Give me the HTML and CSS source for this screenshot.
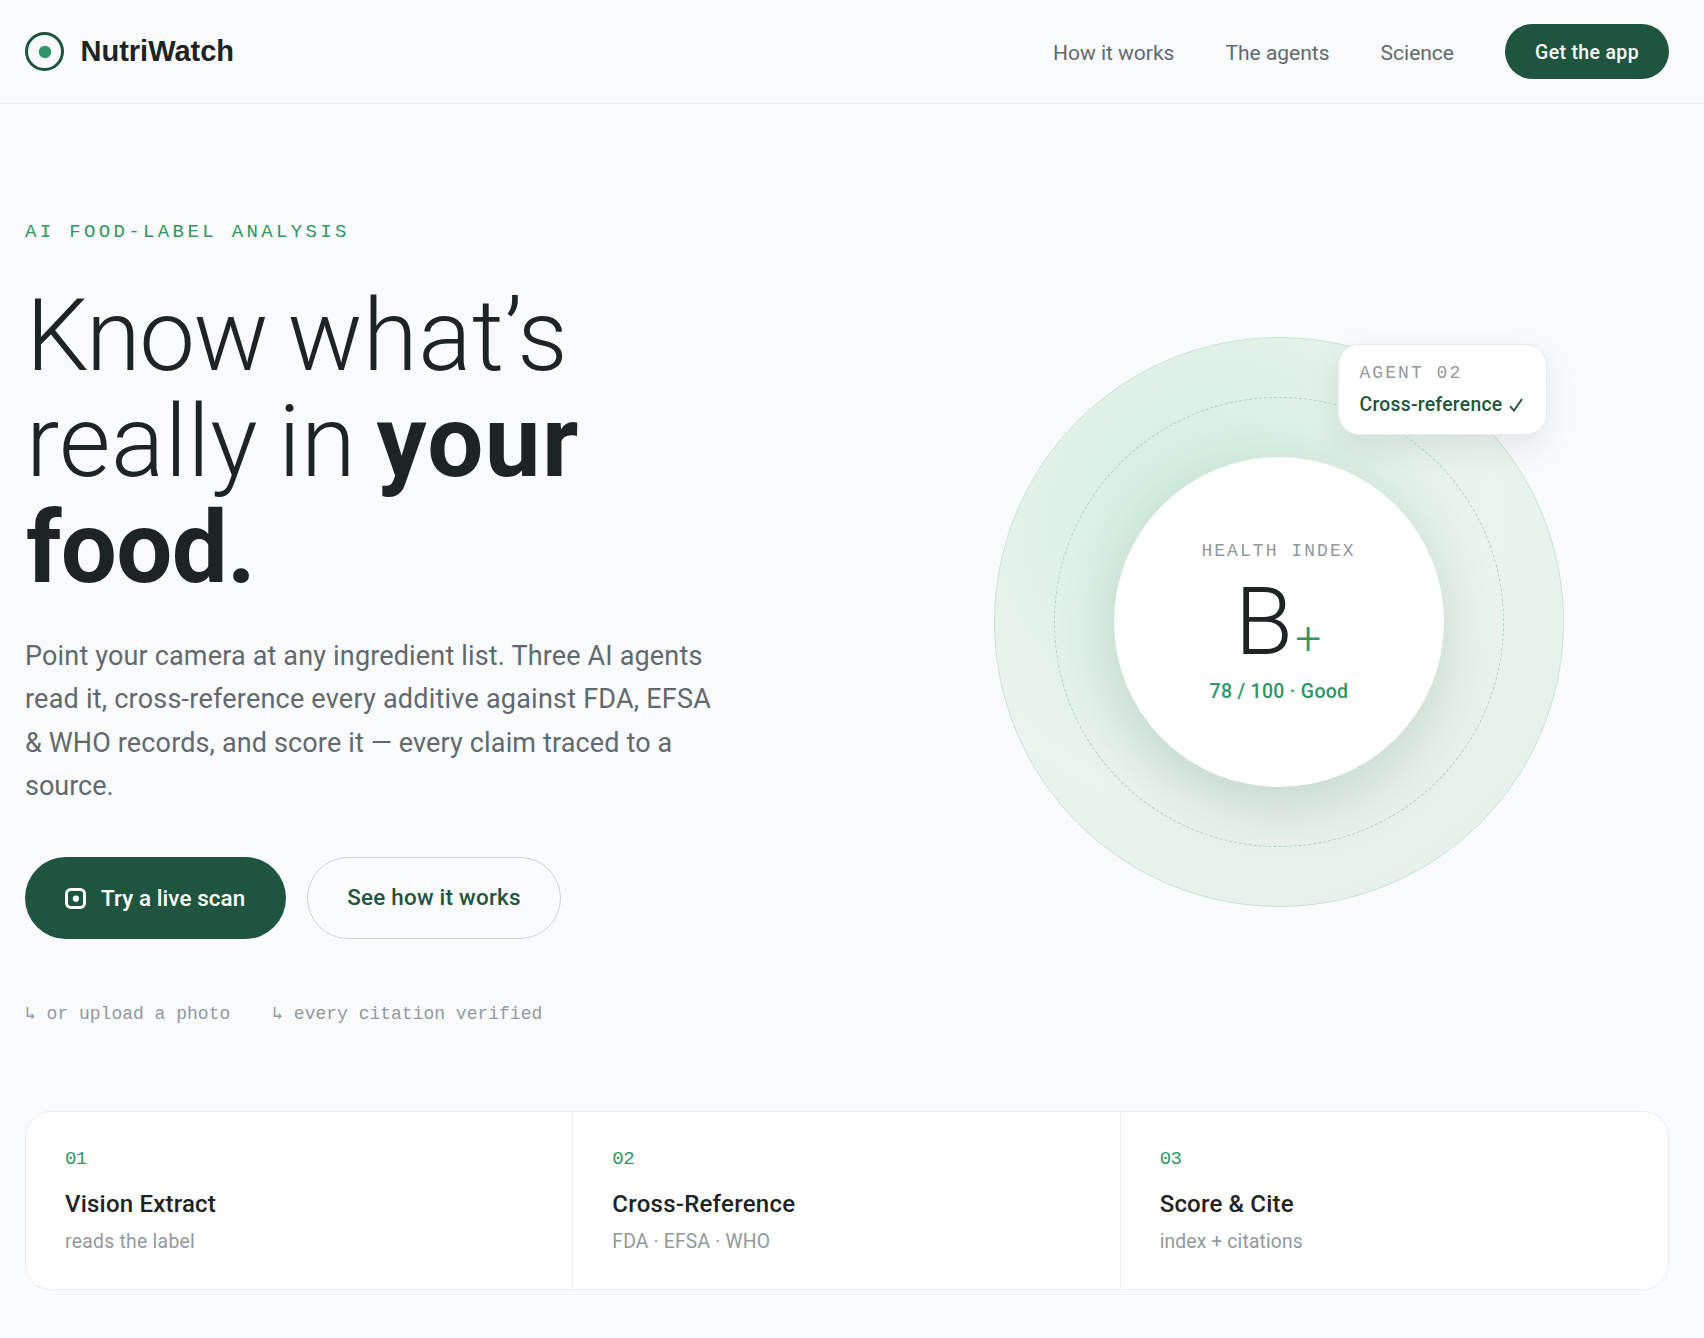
FILE: index.html
```html
<!DOCTYPE html>
<html lang="en">
<head>
<meta charset="utf-8">
<title>NutriWatch</title>
<link rel="stylesheet" href="styles.css">
</head>
<body>
<header class="header">
  <a class="brand">
    <svg class="brand-mark" viewBox="0 0 39 39"><circle cx="19.5" cy="19.5" r="18" fill="none" stroke="#1f543e" stroke-width="3"/><circle cx="20" cy="20" r="6.2" fill="#2f9566"/></svg>
    <span class="brand-name">NutriWatch</span>
  </a>
  <nav class="nav">
    <a class="nav-link">How it works</a>
    <a class="nav-link">The agents</a>
    <a class="nav-link">Science</a>
    <a class="nav-cta">Get the app</a>
  </nav>
</header>
<main class="main">
  <section class="hero">
    <div class="copy">
      <p class="eyebrow">AI FOOD-LABEL ANALYSIS</p>
      <h1 class="title"><span class="t0">Know </span><span class="t1">what’s</span><br><span class="t2">really in </span><b class="t3">your</b><br><b class="t4">food.</b></h1>
      <p class="lead"><span class="l1">Point your camera at any ingredient list. Three AI agents</span><br><span class="l2">read it, cross-reference every additive against FDA, EFSA</span><br><span class="l3">&amp; WHO records, and score it — every claim traced to a</span><br><span class="l4">source.</span></p>
      <div class="actions">
        <a class="btn btn-primary">
          <svg class="scan" viewBox="0 0 21 21"><rect x="1.5" y="1.5" width="18" height="18" rx="4.2" fill="none" stroke="#fff" stroke-width="3"/><circle cx="10.9" cy="10.7" r="3.1" fill="#fff"/></svg>
          <span>Try a live scan</span>
        </a>
        <a class="btn btn-ghost"><span>See how it works</span></a>
      </div>
      <div class="notes">
        <span><i class="arrow">↳</i> or upload a photo</span>
        <span><i class="arrow">↳</i> every citation verified</span>
      </div>
    </div>
    <div class="visual">
      <div class="halo">
        <div class="orbit">
          <div class="score">
            <span class="score-label">HEALTH INDEX</span>
            <span class="grade">B<span class="plus">+</span></span>
            <span class="score-value">78 / 100 · Good</span>
          </div>
        </div>
        <div class="chip">
          <span class="chip-label">AGENT 02</span>
          <span class="chip-text">Cross-reference <svg class="check" viewBox="0 0 14 14"><path d="M1 8.2 L5 12.6 L13 1" fill="none" stroke="#1f543e" stroke-width="1.9"/></svg></span>
        </div>
      </div>
    </div>
  </section>
  <section class="steps">
    <div class="step"><span class="num">01</span><span class="name n1">Vision Extract</span><span class="desc d1">reads the label</span></div>
    <div class="step"><span class="num">02</span><span class="name n2">Cross-Reference</span><span class="desc d2">FDA · EFSA · WHO</span></div>
    <div class="step"><span class="num">03</span><span class="name n1">Score &amp; Cite</span><span class="desc d3">index + citations</span></div>
  </section>
</main>
</body>
</html>
```
FILE: styles.css
```css
* { box-sizing: border-box; }
body { margin: 0; min-height: 1338px; background: #f9fafc; color: #1e2324; font-family: Roboto, "Liberation Sans", sans-serif; }
p, h1 { margin: 0; }
.header { display: flex; justify-content: space-between; align-items: center; height: 104px; padding: 0 35px 0 25px; border-bottom: 1px solid #ebedef; }
.brand { display: flex; align-items: center; gap: 16.5px; }
.brand-mark { width: 39px; height: 39px; }
.brand-name { font: 700 29px/36px "Liberation Sans", Arial, sans-serif; margin-top: -1px; }
.nav { display: flex; align-items: center; }
.nav-link { margin-right: 51px; padding-top: 2px; font-size: 21px; line-height: 28px; color: #62696e; }
.nav-cta { display: flex; align-items: center; justify-content: center; width: 164px; height: 55px; padding-top: 2px; border-radius: 28px; background: #1f543e; color: #fff; font-size: 19.5px; font-weight: 500; letter-spacing: .35px; }

.main { padding: 117px 35px 0 25px; }
.hero { display: grid; grid-template-columns: 1fr 1fr; gap: 82px; }
.eyebrow { margin-top: -1px; font: 19px/24px "Liberation Mono", monospace; letter-spacing: 3.36px; color: #2f9566; }
.title { margin-top: 39px; font-size: 99.5px; line-height: 106.1px; font-weight: 300; white-space: nowrap; }
.title b { font-weight: 700; }
.t0 { margin-left: 1px; letter-spacing: -1.6px; word-spacing: -2px; }
.t1 { letter-spacing: .5px; }
.t2 { margin-left: 1px; letter-spacing: .45px; word-spacing: -4.5px; }
.t3 { letter-spacing: 1.4px; }
.t4 { margin-left: 1px; letter-spacing: -.75px; }
.lead { margin-top: 33.8px; font-size: 27px; line-height: 43.4px; color: #62696e; white-space: nowrap; }
.l1 { letter-spacing: .16px; }
.l2 { letter-spacing: .22px; }
.l3 { letter-spacing: .14px; }
.l4 { letter-spacing: 0; }
.actions { display: flex; gap: 21px; margin-top: 48.6px; }
.btn { display: flex; align-items: center; height: 82px; border-radius: 41px; font-size: 22.4px; font-weight: 500; white-space: nowrap; }
.btn-primary { width: 261px; padding: 0 0 0 40px; gap: 15px; background: #1f543e; color: #fff; letter-spacing: .1px; }
.scan { width: 21px; height: 21px; }
.btn-ghost { width: 254px; justify-content: center; padding-bottom: 2px; border: 1px solid #cfd2d4; color: #1f543e; letter-spacing: .25px; }
.notes { display: flex; gap: 42px; margin-top: 62.5px; font: 18px/24px "Liberation Mono", monospace; color: #92989d; white-space: nowrap; }
.arrow { display: inline-block; width: 10.8px; font: 18px/20px "DejaVu Sans Mono", monospace; }

.visual { display: flex; align-items: center; justify-content: center; padding-bottom: 3px; }
.halo { position: relative; display: flex; align-items: center; justify-content: center; width: 570px; height: 570px; border: 1px solid #c9e3d7; border-radius: 50%; background: radial-gradient(circle at 38% 32%, #d2eddf 0%, #eaf4ee 54%, #e4eee8 100%); }
.orbit { display: flex; align-items: center; justify-content: center; width: 450px; height: 450px; border: 1px dashed #afd0c1; border-radius: 50%; }
.score { display: flex; flex-direction: column; align-items: center; justify-content: center; width: 330px; height: 330px; padding-top: 2px; border-radius: 50%; background: #fff; box-shadow: 0 22px 60px rgba(31, 84, 62, .18); }
.score-label, .chip-label { font: 18px/22px "Liberation Mono", monospace; letter-spacing: 2.05px; color: #92989d; }
.grade { display: block; margin: 12px 1px 0 0; height: 96px; font-size: 95px; line-height: 96px; font-weight: 300; }
.plus { margin-left: 2px; font-size: 46px; font-weight: 300; line-height: 1; color: #2f9566; }
.score-value { margin: 9px 0 0 1px; font-size: 19.5px; line-height: 26px; font-weight: 500; letter-spacing: .3px; color: #2f9566; }
.chip { position: absolute; top: 6px; right: 16px; width: 209px; height: 91.5px; padding: 17.5px 0 0 21px; display: flex; flex-direction: column; border: 1px solid #e6eaea; border-radius: 21px; background: #fff; box-shadow: 0 12px 32px rgba(30, 35, 36, .09); }
.chip-text { margin-top: 8px; font-size: 19.3px; line-height: 26px; font-weight: 500; letter-spacing: .3px; color: #1f543e; white-space: nowrap; }
.check { width: 14px; height: 14px; margin-left: 1px; vertical-align: -1px; }

.steps { display: grid; grid-template-columns: repeat(3, 1fr); height: 179px; margin-top: 85px; border: 1px solid #ebedef; border-radius: 26px; background: #fff; }
.step { display: flex; flex-direction: column; padding: 35px 0 0 39px; border-right: 1px solid #ebedef; }
.step:last-child { border-right: 0; }
.num { font: 19px/24px "Liberation Mono", monospace; letter-spacing: -.6px; color: #2f9566; }
.name { margin-top: 17.5px; font-size: 24px; line-height: 32px; font-weight: 500; }
.n1 { letter-spacing: .2px; }
.n2 { letter-spacing: .25px; }
.desc { margin-top: 9px; font-size: 19.3px; line-height: 26px; color: #92989d; }
.d1 { letter-spacing: .3px; }
.d2 { letter-spacing: .2px; }
.d3 { letter-spacing: .15px; }
```
